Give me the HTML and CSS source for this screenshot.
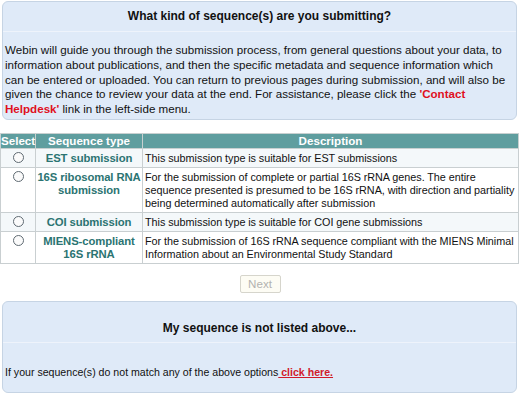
FILE: index.html
```html
<!DOCTYPE html>
<html>
<head>
<meta charset="utf-8">
<link rel="stylesheet" href="styles.css">
</head>
<body>
<div class="box box-top">
  <div class="box-title">What kind of sequence(s) are you submitting?</div>
  <p class="box-text">Webin will guide you through the submission process, from general questions about your data, to information about publications, and then the specific metadata and sequence information which can be entered or uploaded. You can return to previous pages during submission, and will also be given the chance to review your data at the end. For assistance, please click the <span class="hl">'Contact Helpdesk'</span> link in the left-side menu.</p>
</div>

<table class="seq">
  <colgroup><col class="w-sel"><col class="w-type"><col class="w-desc"></colgroup>
  <thead>
    <tr><th>Select</th><th>Sequence type</th><th>Description</th></tr>
  </thead>
  <tbody>
    <tr class="alt"><td class="c-sel"><span class="radio"></span></td><td class="c-type">EST submission</td><td class="c-desc">This submission type is suitable for EST submissions</td></tr>
    <tr><td class="c-sel"><span class="radio"></span></td><td class="c-type">16S ribosomal RNA submission</td><td class="c-desc">For the submission of complete or partial 16S rRNA genes. The entire sequence presented is presumed to be 16S rRNA, with direction and partiality being determined automatically after submission</td></tr>
    <tr class="alt"><td class="c-sel"><span class="radio"></span></td><td class="c-type">COI submission</td><td class="c-desc">This submission type is suitable for COI gene submissions</td></tr>
    <tr><td class="c-sel"><span class="radio"></span></td><td class="c-type">MIENS-compliant<br>16S rRNA</td><td class="c-desc">For the submission of 16S rRNA sequence compliant with the MIENS Minimal Information about an Environmental Study Standard</td></tr>
  </tbody>
</table>

<div class="actions"><button class="btn" disabled>Next</button></div>

<div class="box box-bottom">
  <div class="box-title">My sequence is not listed above...</div>
  <p class="box-text bottom-text">If your sequence(s) do not match any of the above options<a class="link" href="#"> click here.</a></p>
</div>
</body>
</html>
```

FILE: styles.css
```css
html, body {
  margin: 0;
  padding: 0;
  background: #ffffff;
}
body {
  font-family: "Liberation Sans", Arial, sans-serif;
  font-size: 11.6px;
  color: #111111;
  width: 520px;
}
.box {
  margin: 1px 3px 0 2px;
  background: #dfeaf8;
  border: 1px solid #c6d4e4;
  border-radius: 6px;
}
.box-title {
  font-weight: bold;
  font-size: 12px;
  text-align: center;
  height: 29px;
  line-height: 28px;
  border-bottom: 1px solid #eef3fb;
}
.box-text {
  margin: 0;
  padding: 11px 2px 2px 2px;
  line-height: 14.75px;
}
.hl {
  color: #e0101e;
  font-weight: bold;
}
.seq {
  margin-top: 13px;
  width: 518px;
  table-layout: fixed;
  border-collapse: collapse;
  font-size: 10.8px;
}
.w-sel { width: 35px; }
.w-type { width: 107px; }
.w-desc { width: 376px; }
.seq th {
  background: #5f9e9f;
  color: #ffffff;
  font-weight: bold;
  height: 14px;
  padding: 0;
  border: 1px solid #c8d0d0;
  line-height: 14px;
  text-align: center;
  font-size: 11.6px;
}
.seq td {
  border: 1px solid #c9cfd1;
  padding: 3px 0 2px 2px;
  line-height: 13px;
  vertical-align: top;
}
.seq td.c-desc {
  word-spacing: -0.2px;
}
.seq tr.alt td {
  background: #f4f8fa;
}
.seq td.c-sel {
  padding: 2px 0;
  text-align: center;
}
.seq td.c-type {
  color: #2b7472;
  font-weight: bold;
  font-size: 11.3px;
  text-align: center;
  padding: 3px 0 2px 0;
  letter-spacing: -0.1px;
}
.radio {
  display: inline-block;
  vertical-align: top;
  width: 11px;
  height: 11px;
  border: 1px solid #5f6a72;
  border-radius: 50%;
  background: #fbfbfb;
  margin-top: 1px;
  box-sizing: border-box;
}
.actions {
  display: flex;
  justify-content: center;
  padding: 11px 0 8px 0;
}
.btn {
  width: 41px;
  height: 18px;
  padding: 0;
  font-family: "Liberation Sans", Arial, sans-serif;
  font-size: 11.6px;
  color: #b3b3b0;
  background: #fdfcf4;
  border: 1px solid #d6d5cc;
  border-radius: 2px;
}
.box-bottom {
  margin-top: 0;
}
.box-bottom .box-title {
  height: 40px;
  line-height: 52px;
}
.bottom-text {
  padding: 22px 2px 12px 2px;
  font-size: 10.6px;
}
.link {
  color: #d11a2a;
  font-weight: bold;
  text-decoration: underline;
}
```
